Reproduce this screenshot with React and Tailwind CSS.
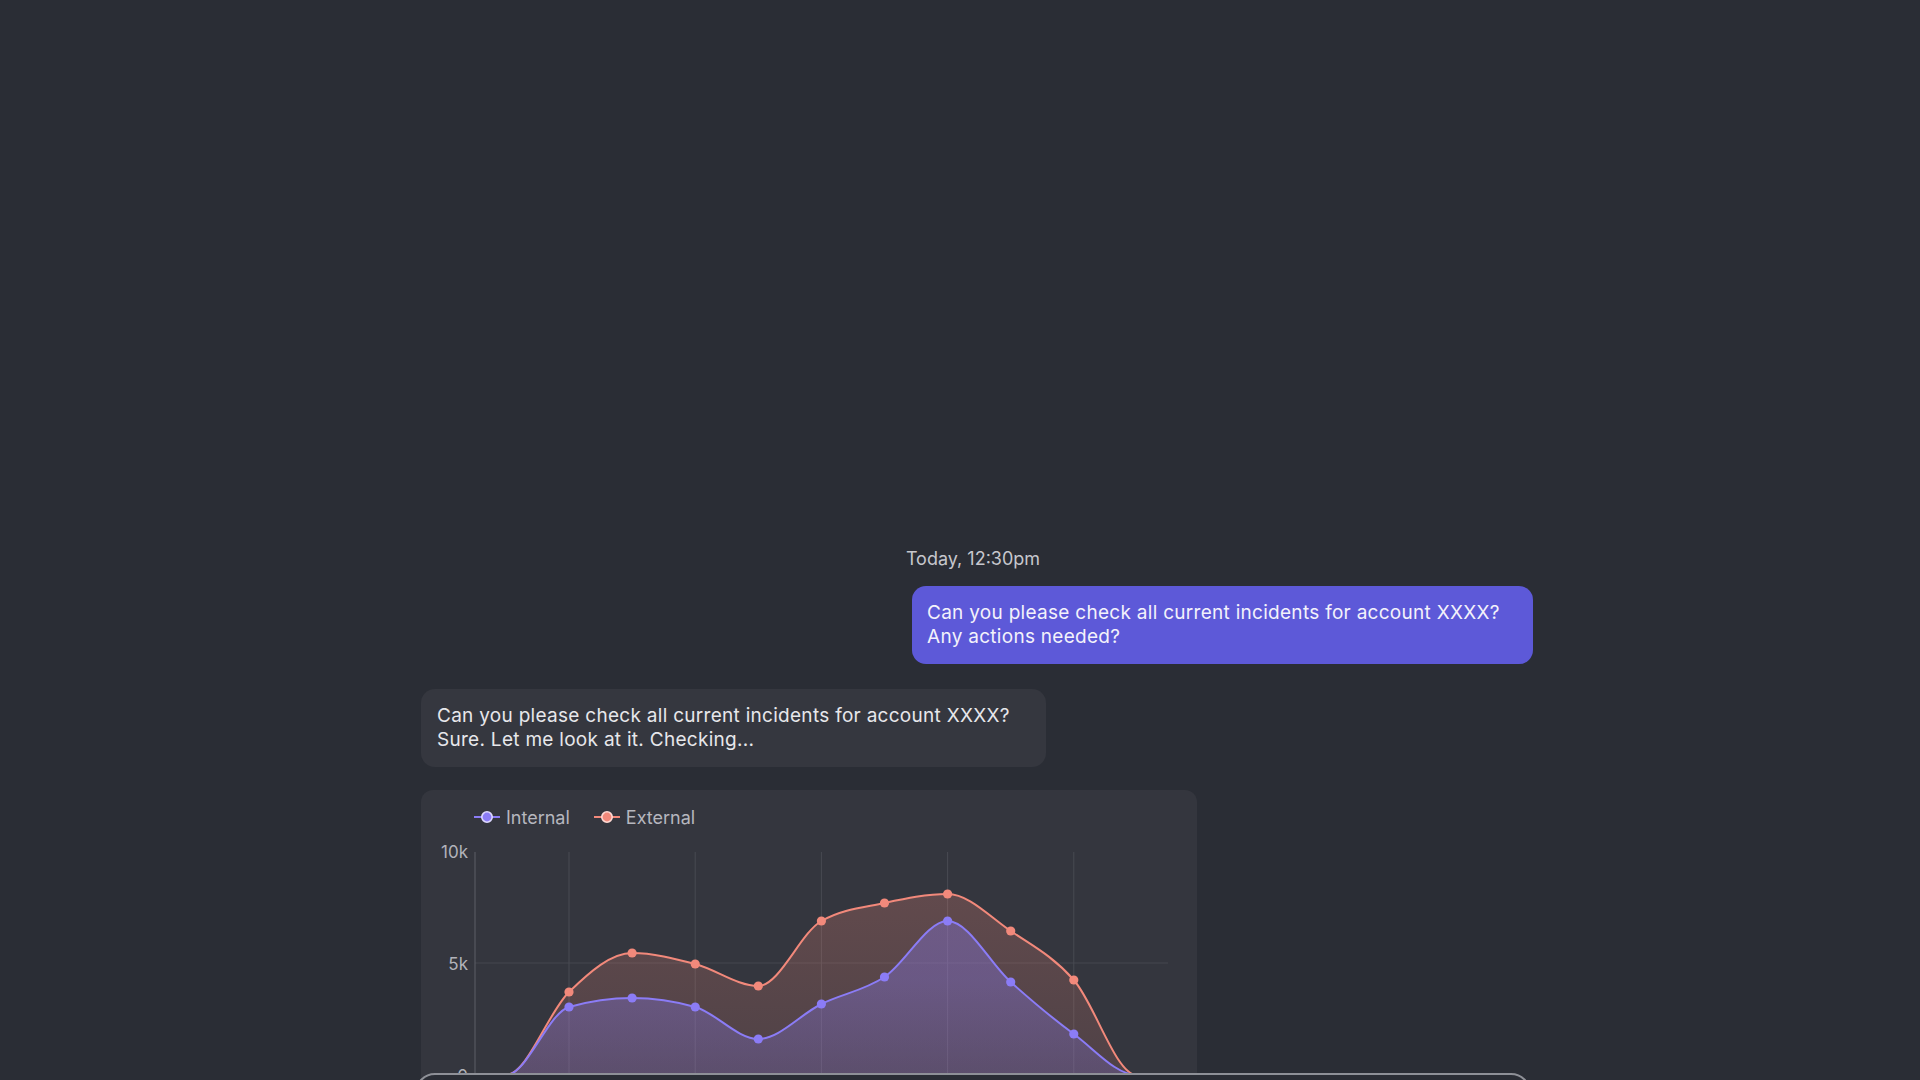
import React from "react";

const W = 63.1;
const X0 = 148;
const BASE = 240;
const EXT = [157, 118, 129, 151, 86, 68, 59, 96, 145];
const INT = [172, 163, 172, 204, 169, 142, 86, 147, 199];

function points(arr) {
  const p = [
    [X0 - 2 * W, BASE],
    [X0 - W, BASE],
  ];
  arr.forEach((y, i) => p.push([X0 + i * W, y]));
  p.push([X0 + 9 * W, BASE]);
  p.push([X0 + 10 * W, BASE]);
  return p;
}

function sign(v) {
  return v < 0 ? -1 : 1;
}

function monotone(p) {
  const n = p.length;
  const t = new Array(n).fill(0);
  for (let i = 1; i < n - 1; i++) {
    const h0 = p[i][0] - p[i - 1][0];
    const h1 = p[i + 1][0] - p[i][0];
    const s0 = (p[i][1] - p[i - 1][1]) / h0;
    const s1 = (p[i + 1][1] - p[i][1]) / h1;
    const pp = (s0 * h1 + s1 * h0) / (h0 + h1);
    t[i] =
      (sign(s0) + sign(s1)) *
        Math.min(Math.abs(s0), Math.abs(s1), 0.5 * Math.abs(pp)) || 0;
  }
  let d = `M${p[0][0]},${p[0][1]}`;
  for (let i = 0; i < n - 1; i++) {
    const dx = (p[i + 1][0] - p[i][0]) / 3;
    d += ` C${p[i][0] + dx},${p[i][1] + dx * t[i]} ${p[i + 1][0] - dx},${
      p[i + 1][1] - dx * t[i + 1]
    } ${p[i + 1][0]},${p[i + 1][1]}`;
  }
  return d;
}

function Series({ data, color, id }) {
  const p = points(data);
  const line = monotone(p);
  const area = `${line} L${p[p.length - 1][0]},${BASE + 40} L${p[0][0]},${BASE + 40} Z`;
  return (
    <g>
      <path d={area} fill={`url(#${id})`} />
      <path d={line} fill="none" stroke={color} strokeWidth="2" />
      {data.map((y, i) => (
        <circle key={i} cx={X0 + i * W} cy={y} r="4.6" fill={color} />
      ))}
    </g>
  );
}

function LegendIcon({ color, ring }) {
  return (
    <svg width="26" height="14" viewBox="0 0 26 14" className="block">
      <line x1="0" y1="7" x2="26" y2="7" stroke={color} strokeWidth="2" />
      <circle cx="13" cy="7" r="5.2" fill={color} stroke={ring} strokeWidth="1.6" />
    </svg>
  );
}

function Chart() {
  const grid = [0, 2, 4, 6, 8].map((i) => X0 + i * W);
  return (
    <svg width="776" height="300" viewBox="0 0 776 300" className="block">
      <defs>
        <linearGradient id="gExt" x1="0" y1="0" x2="0" y2="1">
          <stop offset="0%" stopColor="#f2897b" stopOpacity="0.24" />
          <stop offset="100%" stopColor="#f2897b" stopOpacity="0.12" />
        </linearGradient>
        <linearGradient id="gInt" x1="0" y1="0.3" x2="0" y2="1">
          <stop offset="0%" stopColor="#8b7cf6" stopOpacity="0.34" />
          <stop offset="100%" stopColor="#8b7cf6" stopOpacity="0.16" />
        </linearGradient>
        <clipPath id="plot">
          <rect x="55" y="0" width="720" height="300" />
        </clipPath>
      </defs>
      <line x1="54" y1="128" x2="747" y2="128" stroke="#45474f" strokeWidth="1" />
      {grid.map((x, i) => (
        <line key={i} x1={x} y1="17" x2={x} y2="300" stroke="#484a52" strokeWidth="1" />
      ))}
      <g clipPath="url(#plot)">
        <Series data={EXT} color="#f2897b" id="gExt" />
        <Series data={INT} color="#8b7cf6" id="gInt" />
      </g>
      <line x1="54" y1="17" x2="54" y2="300" stroke="#5d5f67" strokeWidth="1" />
      <g fontFamily="Inter, 'Liberation Sans', sans-serif" fontSize="17" fill="#b2b3ba">
        <text x="47" y="18" textAnchor="end" dominantBaseline="middle">10k</text>
        <text x="47" y="130" textAnchor="end" dominantBaseline="middle">5k</text>
        <text x="47" y="242" textAnchor="end" dominantBaseline="middle">0</text>
      </g>
    </svg>
  );
}

export default function App() {
  return (
    <div className="relative h-screen w-full overflow-hidden bg-[#2a2d35] font-['Inter','Liberation_Sans',sans-serif]">
      <div className="ml-[421px] flex w-[1112px] flex-col pt-[547px]">
        <div className="pr-[8px] text-center text-[18px] leading-[24px] text-[#c6c7cd]">
          Today, 12:30pm
        </div>
        <div className="mt-[15px] w-[621px] self-end rounded-[14px] bg-[#5d59d8] px-[15px] py-[15px] text-[19px] leading-[24px] tracking-[0.015em] text-[#f3f2fb]">
          Can you please check all current incidents for account XXXX?
          <br />
          Any actions needed?
        </div>
        <div className="mt-[25px] w-[625px] self-start rounded-[14px] bg-[#35373f] px-[16px] py-[15px] text-[19px] leading-[24px] tracking-[0.015em] text-[#e7e7eb]">
          Can you please check all current incidents for account XXXX?
          <br />
          Sure. Let me look at it. Checking...
        </div>
        <div className="mt-[23px] h-[340px] w-[776px] self-start rounded-xl bg-[#34363e] pt-[15px]">
          <div className="flex h-[24px] items-center pl-[53px] text-[18px] text-[#b6b7be]">
            <LegendIcon color="#8b7cf6" ring="#ddd8ff" />
            <span className="ml-[6px]">Internal</span>
            <span className="ml-[24px]">
              <LegendIcon color="#f2897b" ring="#ffd9d3" />
            </span>
            <span className="ml-[6px]">External</span>
          </div>
          <div className="mt-[6px]">
            <Chart />
          </div>
        </div>
      </div>
      <div className="absolute left-[415px] top-[1073px] h-[80px] w-[1116px] rounded-[20px] border-2 border-[#8e9097] bg-[#2a2d35]" />
    </div>
  );
}
